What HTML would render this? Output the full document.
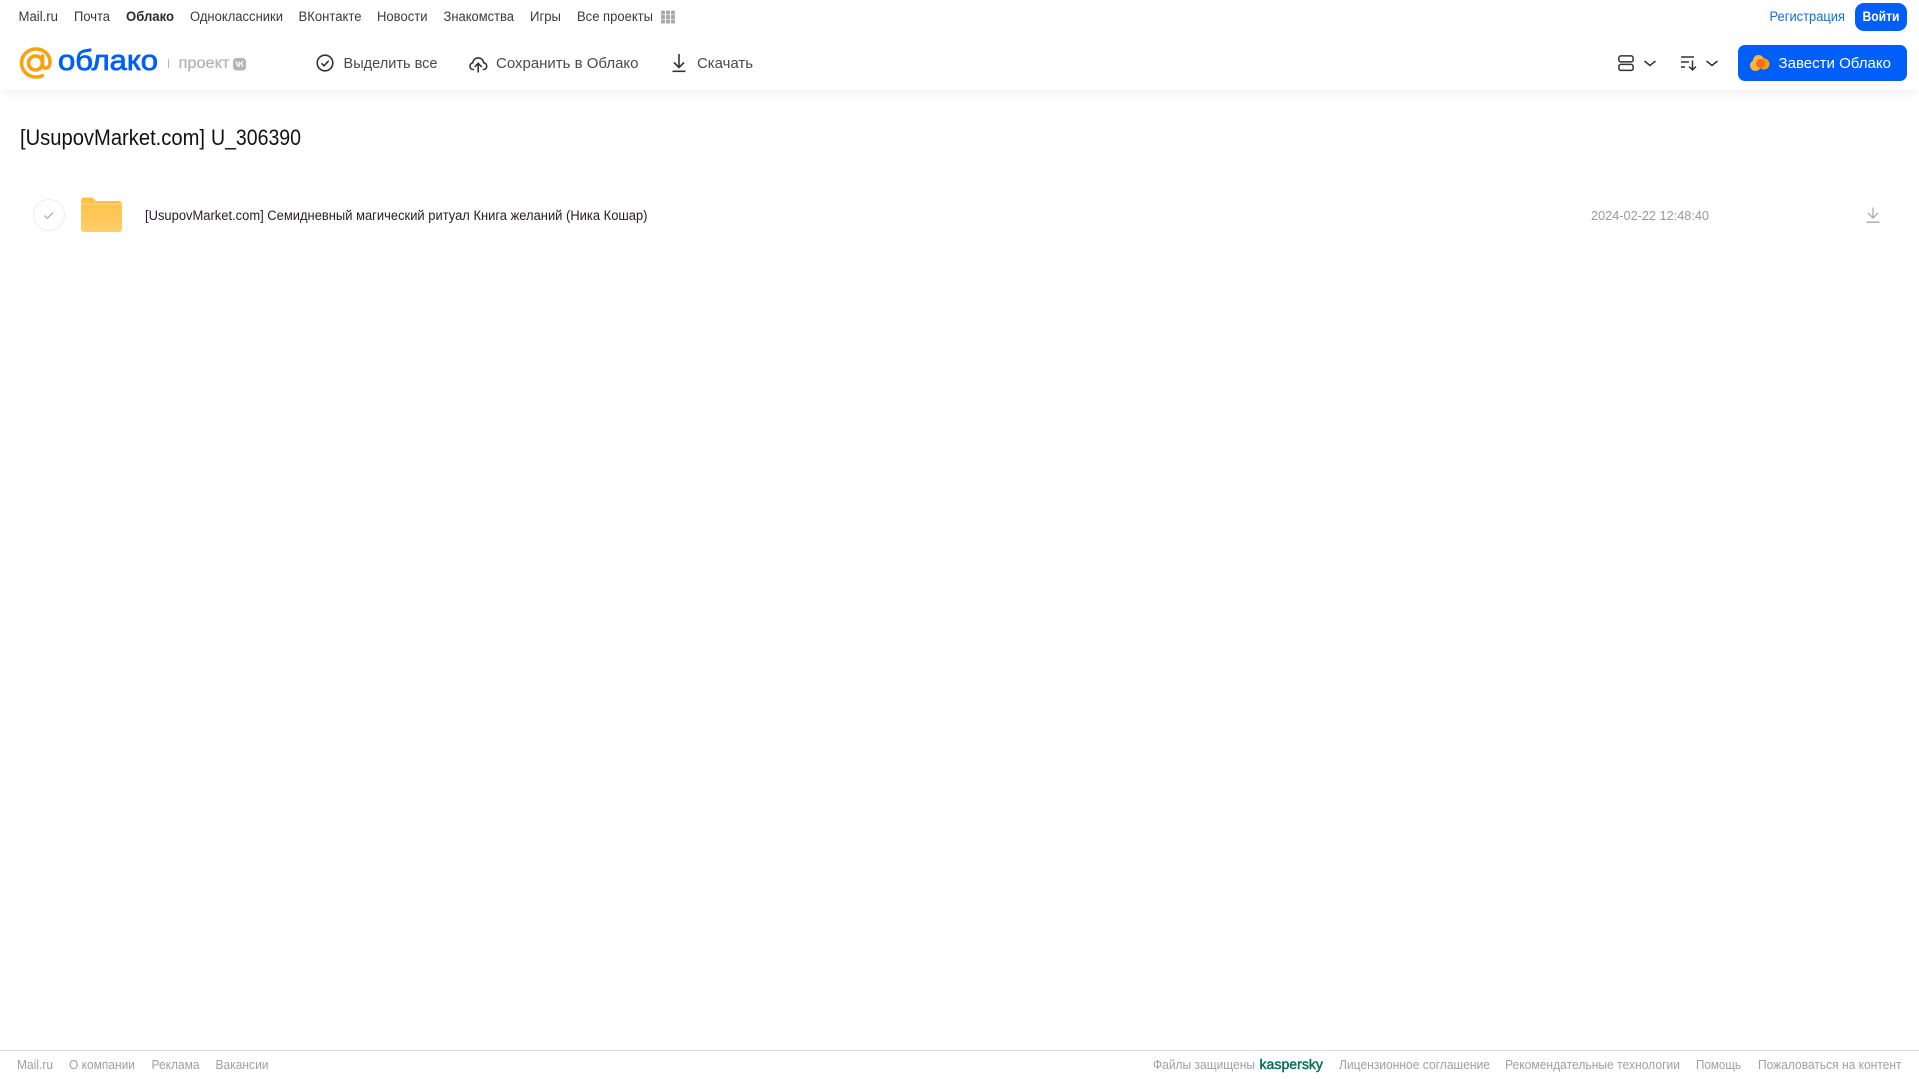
<!DOCTYPE html>
<html lang="ru">
<head>
<meta charset="utf-8">
<title>[UsupovMarket.com] U_306390</title>
<style>
html,body{margin:0;padding:0;background:#fff;width:1919px;height:1079px;overflow:hidden}
.hd{position:absolute;left:0;top:0;width:1919px;height:90px;background:#fff;box-shadow:0 2px 12px rgba(0,0,0,.07)}
svg{position:absolute;left:0;top:0;display:block}
text{font-family:"Liberation Sans",sans-serif;white-space:pre}
.n{font-size:13.5px;fill:#3a3a3a}
.t{font-size:15px;fill:#4a4a4a}
.f{font-size:13px;fill:#a0a0a0}
</style>
</head>
<body>
<div class="hd"></div>
<svg width="1919" height="1079" viewBox="0 0 1919 1079" xmlns="http://www.w3.org/2000/svg">
<defs>
<linearGradient id="fg" x1="0" y1="0" x2="0" y2="1"><stop offset="0" stop-color="#ffc043"/><stop offset="1" stop-color="#ffcf6a"/></linearGradient>
</defs>

<!-- top nav -->
<g class="nav">
<text class="n" x="18.500" y="21" textLength="39.500" lengthAdjust="spacingAndGlyphs">Mail.ru</text>
<text class="n" x="74" y="21" textLength="36" lengthAdjust="spacingAndGlyphs">Почта</text>
<text class="n" x="126" y="21" textLength="48" lengthAdjust="spacingAndGlyphs" font-weight="700" style="fill:#2a2a2a">Облако</text>
<text class="n" x="190" y="21" textLength="93" lengthAdjust="spacingAndGlyphs">Одноклассники</text>
<text class="n" x="298.500" y="21" textLength="63" lengthAdjust="spacingAndGlyphs">ВКонтакте</text>
<text class="n" x="377" y="21" textLength="50.500" lengthAdjust="spacingAndGlyphs">Новости</text>
<text class="n" x="443.500" y="21" textLength="70.500" lengthAdjust="spacingAndGlyphs">Знакомства</text>
<text class="n" x="530" y="21" textLength="31" lengthAdjust="spacingAndGlyphs">Игры</text>
<text class="n" x="577" y="21" textLength="76" lengthAdjust="spacingAndGlyphs">Все проекты</text>
<g fill="#a8a8a8">
<rect x="661" y="10.500" width="4" height="4" rx=".8"/><rect x="666" y="10.500" width="4" height="4" rx=".8"/><rect x="671" y="10.500" width="4" height="4" rx=".8"/>
<rect x="661" y="15" width="4" height="4" rx=".8"/><rect x="666" y="15" width="4" height="4" rx=".8"/><rect x="671" y="15" width="4" height="4" rx=".8"/>
<rect x="661" y="19.500" width="4" height="4" rx=".8"/><rect x="666" y="19.500" width="4" height="4" rx=".8"/><rect x="671" y="19.500" width="4" height="4" rx=".8"/>
</g>
<text class="n" x="1769.500" y="21" textLength="75.500" lengthAdjust="spacingAndGlyphs" style="fill:#1a6be0">Регистрация</text>
<rect x="1855" y="3" width="52" height="28" rx="9" fill="#005ff9"/>
<text class="n" x="1862.500" y="21" textLength="37" lengthAdjust="spacingAndGlyphs" font-weight="700" style="fill:#fff">Войти</text>
</g>

<!-- logo -->
<g fill="none" stroke="#f9a013" stroke-width="3.600" stroke-linecap="round">
<circle cx="35.500" cy="63" r="7"/>
<path d="M42.500 56v8.500c0 5 7 5 7.500-1.500.5-8.200-6.200-14-14-14-8 0-14.500 6.300-14.500 14s6.300 14 14.300 14c2.500 0 4.500-.4 6.400-1.300"/>
</g>
<text x="58" y="70" font-size="29" textLength="100" lengthAdjust="spacingAndGlyphs" fill="#005ff9" stroke="#005ff9" stroke-width=".8">облако</text>
<rect x="168" y="59" width="1" height="9" fill="#b5b5b5"/>
<text x="178.500" y="68" font-size="15.500" textLength="51" lengthAdjust="spacingAndGlyphs" fill="#b5b5b5" stroke="#b5b5b5" stroke-width=".3">проект</text>
<rect x="233" y="58" width="13" height="12.500" rx="3.500" fill="#b5b5b5"/>
<path d="M236 61.500l1.800 4.500 1.400-.1v-4.400M243 61.500l-2.200 2.200 2.400 2.600" fill="none" stroke="#fff" stroke-width="1.300"/>

<!-- toolbar -->
<circle cx="325" cy="63" r="7.800" fill="none" stroke="#333" stroke-width="1.600"/>
<path d="M321.500 63.300l2.500 2.500 4.700-5" fill="none" stroke="#333" stroke-width="1.600"/>
<text class="t" x="343.500" y="68" textLength="94" lengthAdjust="spacingAndGlyphs">Выделить все</text>

<path d="M474 69.500h-.7c-2 0-3.300-1.500-3.300-3.300 0-1.700 1.100-3 2.700-3.300.5-3.100 2.700-5 5.500-5 2.900 0 5 2 5.500 4.900 1.800.2 3 1.600 3 3.400s-1.300 3.300-3.300 3.300h-.7" fill="none" stroke="#333" stroke-width="1.600"/>
<path d="M478.200 72.500v-9M474.700 67l3.500-3.700 3.500 3.700" fill="none" stroke="#333" stroke-width="1.600"/>
<text class="t" x="496" y="68" textLength="142.500" lengthAdjust="spacingAndGlyphs">Сохранить в Облако</text>

<path d="M679 54v13.500M674 62.500l5 5 5-5" fill="none" stroke="#333" stroke-width="1.600"/>
<rect x="672.500" y="70.500" width="13" height="1.600" fill="#333"/>
<text class="t" x="697" y="68" textLength="56" lengthAdjust="spacingAndGlyphs">Скачать</text>

<!-- right controls -->
<g fill="none" stroke="#333" stroke-width="1.500">
<rect x="1618.900" y="55.900" width="14.200" height="6" rx="2"/>
<rect x="1618.900" y="64.400" width="14.200" height="6" rx="2"/>
<path d="M1644.500 61l5.500 4.500 5.500-4.500"/>
<path d="M1681 57h13M1681 62h8M1681 67h4"/>
<path d="M1692.500 60.500v9M1689 66.500l3.500 3.500 3.500-3.500"/>
<path d="M1706.500 61l5.500 4.500 5.500-4.500"/>
</g>
<rect x="1738" y="45" width="169" height="36" rx="7" fill="#005ff9"/>
<circle cx="1755.500" cy="65.500" r="5.500" fill="#ffb540"/>
<circle cx="1758.500" cy="60.500" r="5.500" fill="#ffb540"/>
<circle cx="1764" cy="64" r="5.500" fill="#ff9e00"/>
<circle cx="1760.500" cy="63.500" r="4.500" fill="#f56d1f"/>
<text x="1778.500" y="68" font-size="15" textLength="112.500" lengthAdjust="spacingAndGlyphs" fill="#fff">Завести Облако</text>

<!-- title -->
<text x="20" y="145" font-size="22" textLength="185" lengthAdjust="spacingAndGlyphs" fill="#111">[UsupovMarket.com]</text>
<text x="211" y="145" font-size="22" textLength="90" lengthAdjust="spacingAndGlyphs" fill="#111">U_306390</text>

<!-- row -->
<circle cx="49" cy="215" r="15.500" fill="#fff" stroke="#ededed"/>
<path d="M44.500 215.500l3 2.800 5.500-5.800" fill="none" stroke="#a5a5a5" stroke-width="1.200"/>
<path d="M81 200.500a3 3 0 0 1 3-3h7c2 0 3 1 4.500 3.500H119a3 3 0 0 1 3 3v25a3 3 0 0 1-3 3H84a3 3 0 0 1-3-3z" fill="url(#fg)"/>
<rect x="81" y="203.500" width="41" height="1.500" fill="#ffd27a"/>
<text x="145" y="220" font-size="13.500" textLength="502.500" lengthAdjust="spacingAndGlyphs" fill="#2a1a2a">[UsupovMarket.com] Семидневный магический ритуал Книга желаний (Ника Кошар)</text>
<text x="1591" y="220" font-size="13" textLength="118" lengthAdjust="spacingAndGlyphs" fill="#999">2024-02-22 12:48:40</text>
<path d="M1873 207.500v10.500M1868 213l5 5 5-5" fill="none" stroke="#aaa" stroke-width="1.300"/>
<rect x="1866.500" y="221.500" width="13" height="1.400" fill="#aaa"/>

<!-- footer -->
<rect x="0" y="1050" width="1919" height="1" fill="#d9d9d9"/>
<text class="f" x="17" y="1069" textLength="36" lengthAdjust="spacingAndGlyphs">Mail.ru</text>
<text class="f" x="69" y="1069" textLength="66" lengthAdjust="spacingAndGlyphs">О компании</text>
<text class="f" x="151.500" y="1069" textLength="48" lengthAdjust="spacingAndGlyphs">Реклама</text>
<text class="f" x="215.500" y="1069" textLength="53" lengthAdjust="spacingAndGlyphs">Вакансии</text>
<text class="f" x="1153" y="1069" textLength="102" lengthAdjust="spacingAndGlyphs">Файлы защищены</text>
<text x="1259.500" y="1069" font-size="13.500" textLength="63.500" lengthAdjust="spacingAndGlyphs" fill="#006d5c" stroke="#006d5c" stroke-width=".4">kaspersky</text>
<text class="f" x="1339" y="1069" textLength="151" lengthAdjust="spacingAndGlyphs">Лицензионное соглашение</text>
<text class="f" x="1505" y="1069" textLength="175" lengthAdjust="spacingAndGlyphs">Рекомендательные технологии</text>
<text class="f" x="1696" y="1069" textLength="45" lengthAdjust="spacingAndGlyphs">Помощь</text>
<text class="f" x="1758" y="1069" textLength="143.500" lengthAdjust="spacingAndGlyphs">Пожаловаться на контент</text>
</svg>
</body>
</html>
